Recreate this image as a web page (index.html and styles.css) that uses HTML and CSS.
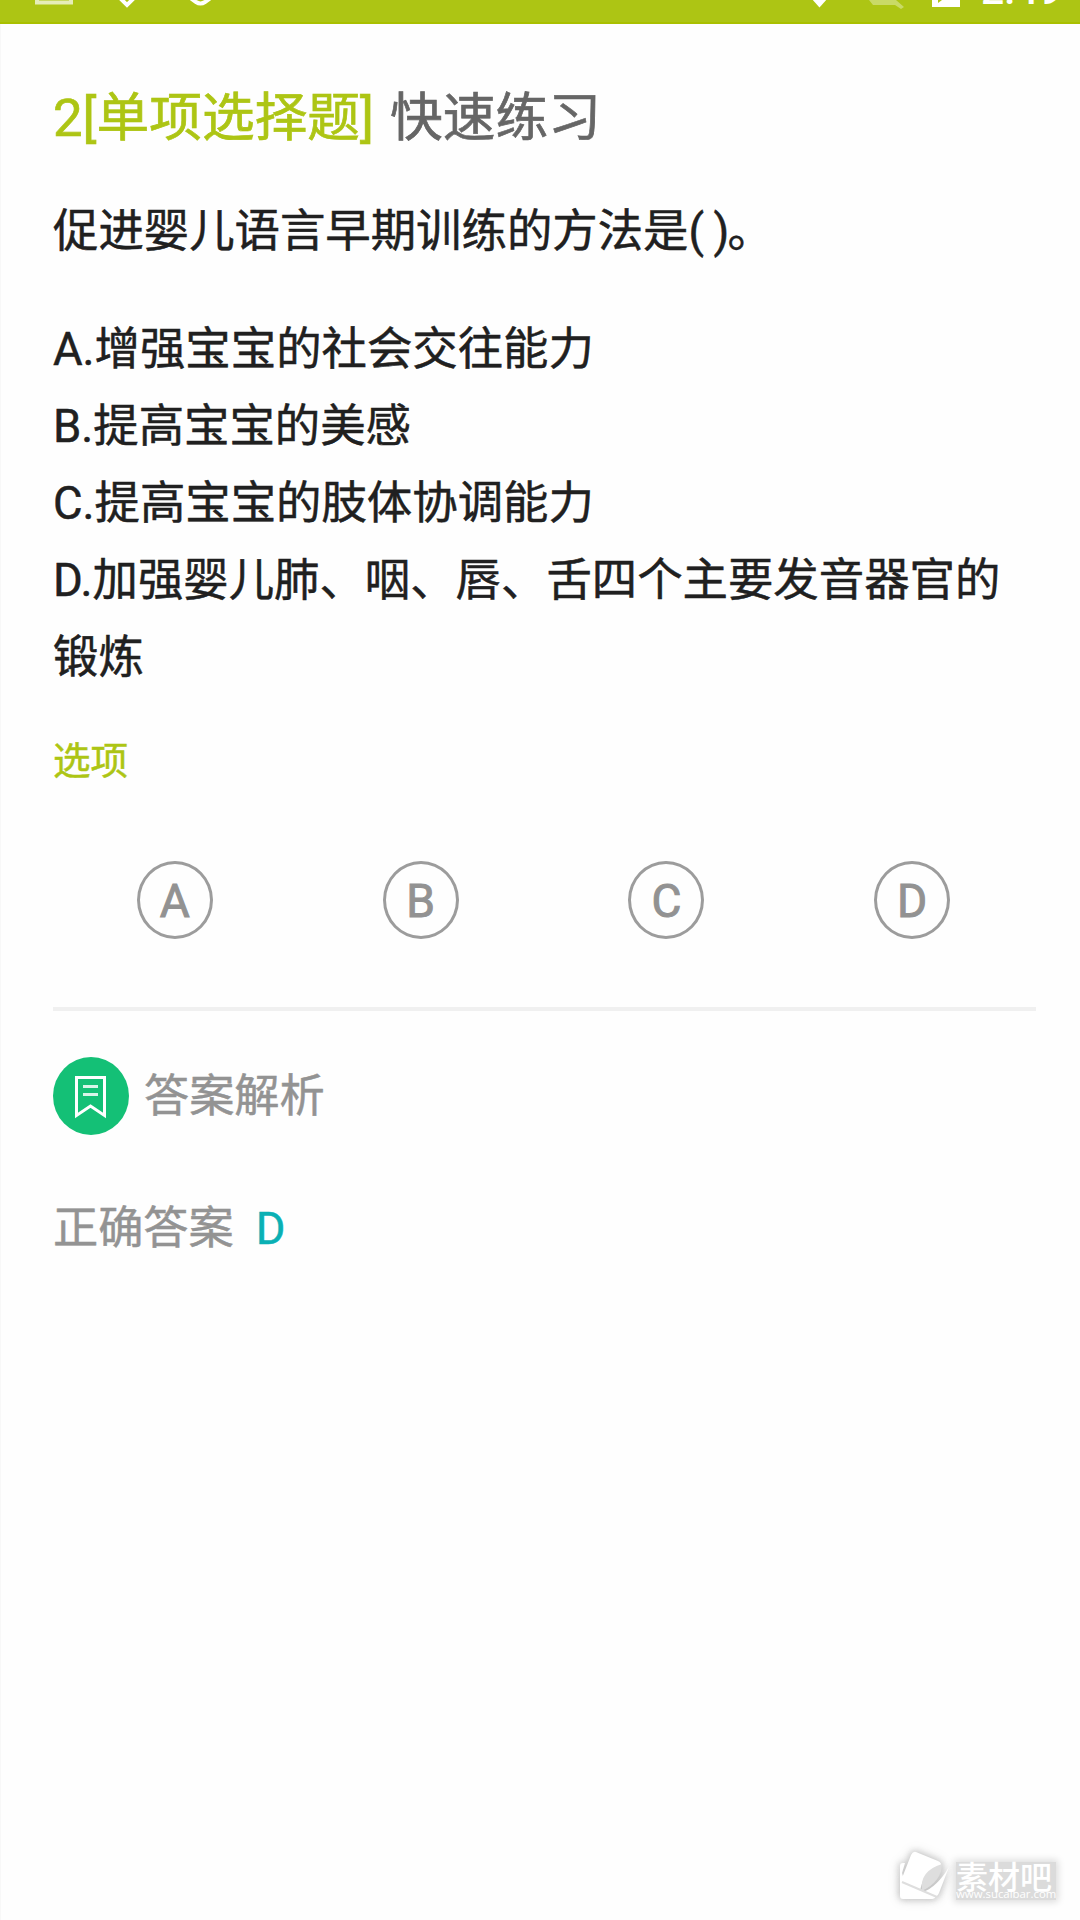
FILE: index.html
```html
<!DOCTYPE html>
<html lang="zh-CN">
<head>
<meta charset="utf-8">
<title>快速练习</title>
<link rel="stylesheet" href="styles.css">
</head>
<body>
<header class="status">
  <svg class="status-icons" viewBox="0 0 1080 24" width="1080" height="24">
    <g fill="none" stroke="#fff" stroke-width="4">
      <path d="M37 -4V2.500H71V-4" stroke="#e6edb8"/>
      <path d="M116 -6L127 5L138 -6"/>
      <path d="M185 -6Q193 0 196 2Q200.500 5 205 2Q208 0 216 -6"/>
    </g>
    <path d="M811 -2H828L819.5 7.500Z" fill="#fff"/>
    <path d="M869 0H896L904 7L901 9L895 5H873Z" fill="#c9da66"/>
    <path d="M932 0H960V7H932Z" fill="#fff"/>
    <path d="M938 0H942L938 3Z" fill="#adc514"/>
  </svg>
  <span class="clock">2:49</span>
</header>
<main class="page">
  <h1 class="title"><span class="kind">2[单项选择题]</span> 快速练习</h1>
  <p class="question">促进婴儿语言早期训练的方法是<span class="blank">( )</span>。</p>
  <ol class="answers">
    <li>A.增强宝宝的社会交往能力</li>
    <li>B.提高宝宝的美感</li>
    <li>C.提高宝宝的肢体协调能力</li>
    <li>D.加强婴儿肺、咽、唇、舌四个主要发音器官的锻炼</li>
  </ol>
  <h2 class="label">选项</h2>
  <div class="choices">
    <button class="choice">A</button>
    <button class="choice">B</button>
    <button class="choice">C</button>
    <button class="choice">D</button>
  </div>
  <section class="analysis">
    <svg class="badge" viewBox="0 0 76 78" width="76" height="78">
      <ellipse cx="38" cy="39" rx="38" ry="39" fill="#14c076"/>
      <g fill="none" stroke="#fff" stroke-width="3">
        <path d="M23.500 20.500H51.500V58.500L37.500 49L23.500 58.500Z"/>
        <path d="M30 29.500H45M30 37.500H45" stroke="#d8f5e8"/>
      </g>
    </svg>
    <span>答案解析</span>
  </section>
  <p class="correct">正确答案<span class="key">D</span></p>
</main>
<aside class="watermark">
  <svg class="wm-logo" viewBox="0 0 52 52" width="52" height="52">
    <path d="M4 14H6L3 24L6 34L30 44L37 47Q36 50 33 50H4Q1 50 1 47V17Q1 14 4 14Z" fill="#fff"/>
    <path d="M17 3L39 12Q43 14 42 17Q24 23 21 42L5 34Q2 32 3 29L12 6Q14 2 17 3Z" fill="#fff"/>
    <path d="M50 18L40 44Q38 49 33 47L24 43Q38 38 50 18Z" fill="#fff"/>
    <path d="M23 42Q20 22 43 15Q43 32 23 42Z" fill="#dedede"/>
    <path d="M3 33L38 48" stroke="#dedede" stroke-width="2"/>
  </svg>
  <div class="wm-text"><span class="wm-name">素材吧</span><span class="wm-url">www.sucaibar.com</span></div>
</aside>
</body>
</html>
```
FILE: styles.css
```css
* { box-sizing: border-box; margin: 0; padding: 0; }
body {
  width: 1080px; height: 1920px; overflow: hidden; position: relative;
  background: #fefefe; color: #202020;
  font-family: Roboto, "Noto Sans CJK SC", sans-serif;
}
.status {
  height: 24px; background: #adc514; border-bottom: 2px solid #a9c000;
  position: relative; overflow: hidden;
}
.status-icons { display: block; }
.clock {
  position: absolute; left: 981px; top: -30px;
  font-size: 41px; line-height: 40px; font-weight: 500; color: #fff;
}
.page { padding: 54px 44px 0 52px; border-left: 1px solid #f8f8f8; height: 1896px; }
.title { font-size: 52.7px; line-height: 80px; font-weight: 400; color: #666; word-spacing: 3px; -webkit-text-stroke: .7px; }
.kind { color: #adc514; }
.question { margin-top: 35px; font-size: 45.4px; line-height: 77px; -webkit-text-stroke: .5px; }
.blank { letter-spacing: -.9px; margin-right: -1px; }
.answers { margin-top: 41px; list-style: none; font-size: 45.4px; line-height: 77.100px; -webkit-text-stroke: .5px; }
.label { margin-top: 35px; font-size: 37.600px; line-height: 60px; font-weight: 400; color: #adc514; -webkit-text-stroke: .5px; }
.choices {
  margin-top: 70px; padding-bottom: 68px; border-bottom: 4px solid #f0f0f0;
  display: grid; grid-template-columns: repeat(4, 1fr); justify-items: center;
}
.choice {
  width: 76px; height: 78px; margin-right: 2px;
  border: 3.500px solid #9c9c9c; border-radius: 50%; background: none;
  font: 400 46px/74px Roboto, sans-serif; color: #929292; -webkit-text-stroke: 1px;
}
.analysis {
  margin-top: 44px; display: flex; align-items: center; gap: 15px;
  font-size: 45.2px; line-height: 78px; color: #939393; -webkit-text-stroke: .5px;
}
.analysis span { padding-top: 3px; }
.badge { display: block; }
.correct { margin-top: 54px; font-size: 45.2px; line-height: 77px; color: #939393; -webkit-text-stroke: .5px; }
.key { margin-left: 22px; color: #0ab0b4; }
.watermark { position: absolute; left: 899px; top: 1849px; display: flex; gap: 5px; color: #fff; }
.wm-logo { filter: drop-shadow(0 0 3px #c4c4c4) drop-shadow(0 0 4px #d4d4d4); overflow: visible; }
.wm-text {
  display: flex; flex-direction: column; height: 38px; margin-top: 13px;
  background: #dbdbdb; box-shadow: 0 0 7px 2px #dbdbdb;
}
.wm-name { font: 500 32px/26px "Noto Sans CJK SC", sans-serif; }
.wm-url { font: 11.400px/12px "Open Sans", sans-serif; }
```
